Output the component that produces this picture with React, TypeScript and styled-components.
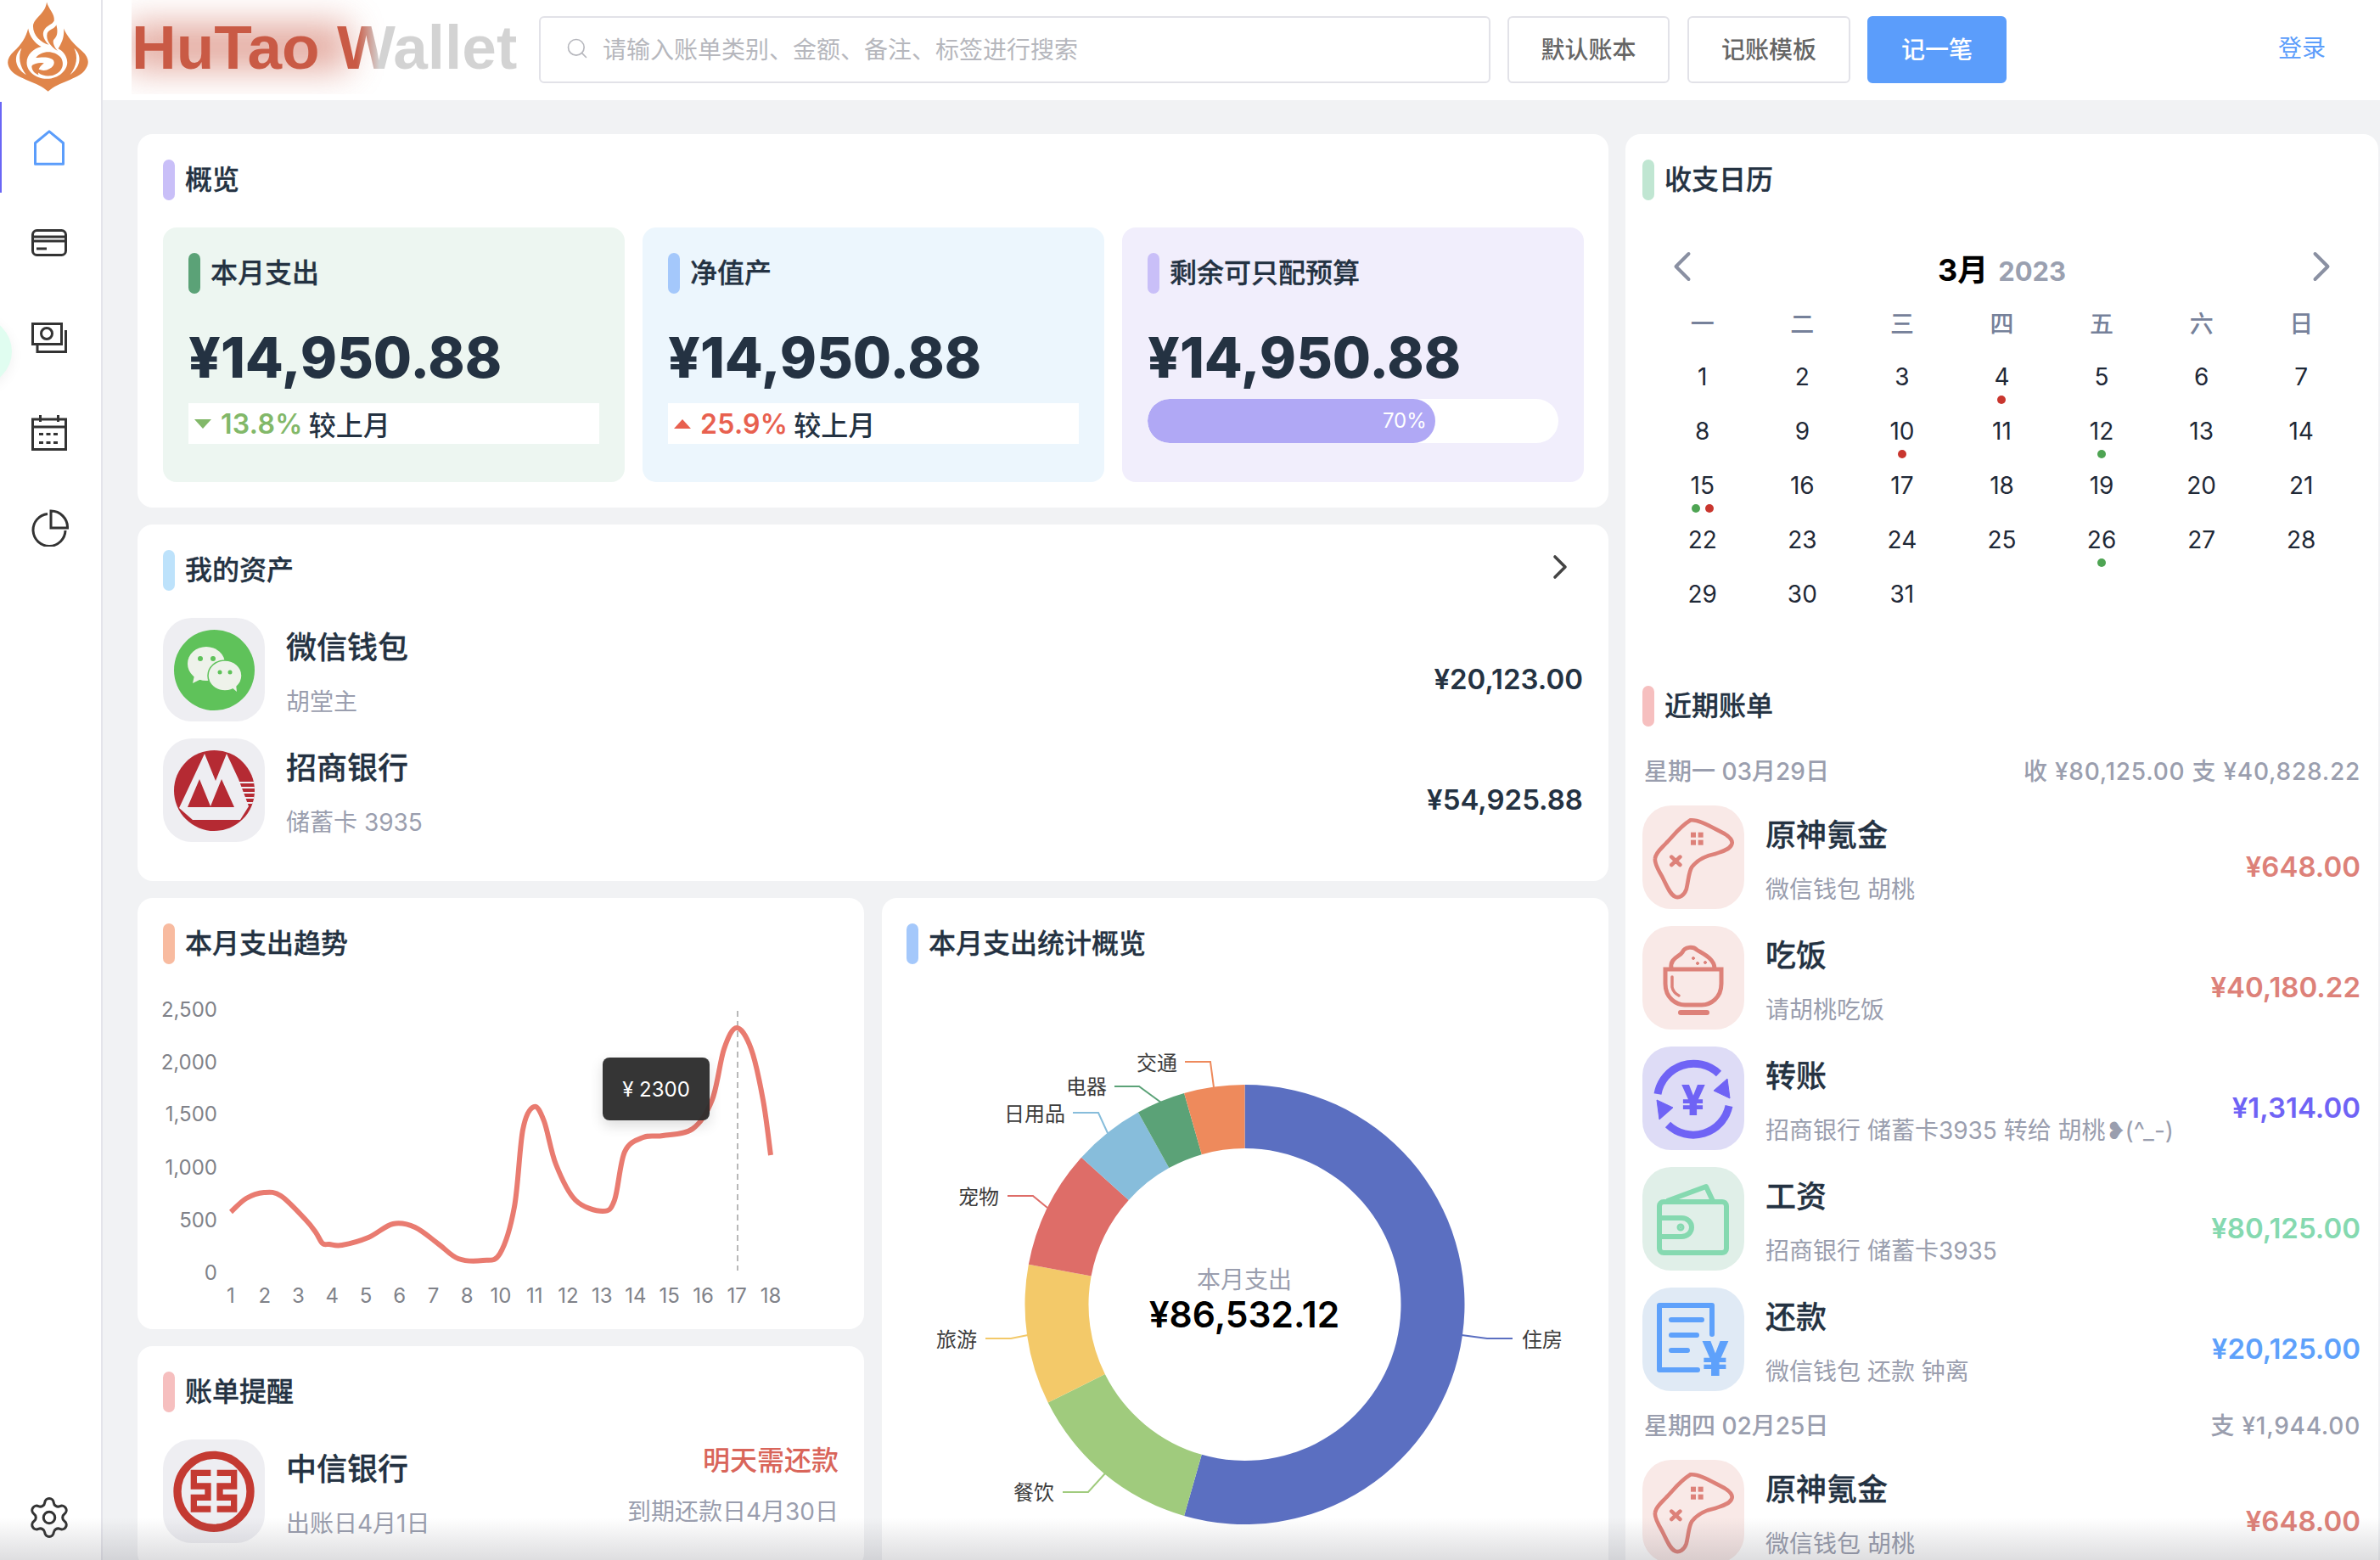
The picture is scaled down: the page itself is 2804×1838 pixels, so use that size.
import React from 'react'
import styled, { createGlobalStyle } from 'styled-components'
import { ChevronLeft, ChevronRight, Search, Settings } from 'lucide-react'

const GlobalStyle = createGlobalStyle`
  html, body {
    margin: 0;
    padding: 0;
    background: #f1f2f4;
  }
  * {
    box-sizing: border-box;
  }
`

const Page = styled.div`
  position: relative;
  width: 2804px;
  height: 1838px;
  overflow: hidden;
  display: grid;
  grid-template-columns: 121px 1fr;
  background: #f1f2f4;
  color: #243242;
  font-family: Inter, 'Noto Sans CJK SC', sans-serif;
`

const BottomFade = styled.div`
  position: absolute;
  left: 0;
  right: 0;
  bottom: 0;
  height: 50px;
  background: linear-gradient(180deg, rgba(90, 90, 100, 0), rgba(90, 90, 100, 0.2));
  pointer-events: none;
`

const Sidebar = styled.aside`
  position: relative;
  display: flex;
  flex-direction: column;
  height: 1838px;
  background: #fff;
  border-right: 2px solid #e4e4ea;
`

const SideBlob = styled.div`
  position: absolute;
  left: -66px;
  top: 374px;
  width: 80px;
  height: 80px;
  border-radius: 50%;
  background: #e0fdf0;
  box-shadow: 0 4px 16px rgba(0, 0, 0, 0.06);
`

const LogoBox = styled.div`
  height: 118px;
  padding-left: 8px;
`

const NavItem = styled.div<{ $active?: boolean }>`
  position: relative;
  height: 112px;
  display: flex;
  align-items: center;
  padding-left: ${(p) => (p.$active ? 40 : 37)}px;
  &::before {
    content: '';
    display: ${(p) => (p.$active ? 'block' : 'none')};
    position: absolute;
    left: 0;
    top: 2px;
    width: 2px;
    height: 107px;
    background: #6a66f5;
  }
`

const SideFoot = styled.div`
  margin-top: auto;
  padding: 0 0 23px 31px;
  color: #333;
  display: flex;
`

const Main = styled.div`
  display: flex;
  flex-direction: column;
  min-width: 0;
`

const Header = styled.header`
  height: 118px;
  flex-shrink: 0;
  display: flex;
  align-items: center;
  padding: 0 64px 2px 34px;
  background: #fff;
`

const Brand = styled.div`
  position: relative;
  width: 480px;
  height: 118px;
  flex-shrink: 0;
`

const BrandHaze = styled.div`
  position: absolute;
  left: 0;
  top: 0;
  width: 300px;
  height: 112px;
  overflow: hidden;
  &::after {
    content: '';
    position: absolute;
    left: -6px;
    top: 28px;
    width: 262px;
    height: 56px;
    background: #d47a69;
    opacity: 0.62;
    filter: blur(20px);
  }
`

const BrandName = styled.div`
  position: absolute;
  left: 0;
  top: 15px;
  font-family: 'Liberation Sans', Arial, sans-serif;
  font-size: 73px;
  line-height: 84px;
  font-weight: 700;
  white-space: nowrap;
  color: transparent;
  background: linear-gradient(90deg, #c95a45 0, #c95a45 265px, #d3d3d3 292px, #d3d3d3 100%);
  -webkit-background-clip: text;
  background-clip: text;
`

const SearchBox = styled.div`
  width: 1121px;
  height: 79px;
  display: flex;
  align-items: center;
  gap: 16px;
  padding: 0 0 2px 29px;
  border: 2px solid #e2e2e8;
  border-radius: 6px;
  font-size: 28px;
  color: #b6b7bd;
  background: #fff;
`

const HeadButton = styled.div<{ $primary?: boolean; $w: number; $ml: number }>`
  width: ${(p) => p.$w}px;
  height: 79px;
  margin-left: ${(p) => p.$ml}px;
  padding-bottom: 2px;
  display: flex;
  align-items: center;
  justify-content: center;
  border-radius: 6px;
  font-size: 28px;
  font-weight: 500;
  color: ${(p) => (p.$primary ? '#fff' : '#666')};
  background: ${(p) => (p.$primary ? '#5b9dfb' : '#fff')};
  border: 2px solid ${(p) => (p.$primary ? '#5b9dfb' : '#e2e2e8')};
`

const LoginLink = styled.div`
  margin: -6px 0 0 auto;
  font-size: 28px;
  color: #5b9dfb;
`

const Content = styled.main`
  flex: 1;
  min-height: 0;
  display: grid;
  grid-template-columns: 1733px 887px;
  gap: 20px;
  padding: 40px 0 0 41px;
`

const Column = styled.div`
  display: flex;
  flex-direction: column;
  gap: 20px;
`

const Card = styled.section`
  background: #fff;
  border-radius: 18px;
  padding: 30px;
`

const AssetsCard = styled(Card)`
  padding-bottom: 46px;
`

const SectionHead = styled.div<{ $inset?: number }>`
  display: flex;
  align-items: center;
  gap: 12px;
  height: 48px;
  padding-left: ${(p) => p.$inset || 0}px;
  font-size: 32px;
  line-height: 44px;
  font-weight: 500;
  color: #243242;
  -webkit-text-stroke: 0.3px #243242;
`

const HeadLabel = styled.span`
  margin-top: -1px;
`

const HeadMark = styled.i<{ $color: string }>`
  width: 14px;
  height: 48px;
  border-radius: 7px;
  background: ${(p) => p.$color};
`

const HeadAction = styled.div`
  margin-left: auto;
  display: flex;
  color: #444;
  transform: translate(-3px, -4px);
`

const StatRow = styled.div`
  display: grid;
  grid-template-columns: repeat(3, 544px);
  gap: 21px;
  margin-top: 32px;
`

const StatCard = styled.div<{ $bg: string }>`
  height: 300px;
  padding: 30px;
  border-radius: 16px;
  background: ${(p) => p.$bg};
`

const StatAmount = styled.div`
  margin-top: 36px;
  height: 80px;
  font-size: 65.5px;
  line-height: 80px;
  font-weight: 800;
  color: #243242;
`

const Compare = styled.div`
  margin-top: 13px;
  height: 48px;
  display: flex;
  align-items: center;
  padding-left: 7px;
  background: #fff;
  font-size: 32px;
  font-weight: 500;
`

const Arrow = styled.i<{ $up?: boolean }>`
  width: 0;
  height: 0;
  margin-right: 11px;
  border-left: 10px solid transparent;
  border-right: 10px solid transparent;
  ${(p) => (p.$up ? 'border-bottom: 11px solid #e8604f;' : 'border-top: 11px solid #82b869;')}
`

const ComparePercent = styled.span<{ $color: string }>`
  margin-right: 7px;
  font-weight: 600;
  letter-spacing: 0.3px;
  color: ${(p) => p.$color};
`

const Progress = styled.div`
  margin-top: 8px;
  height: 52px;
  border-radius: 26px;
  background: #fff;
  overflow: hidden;
`

const ProgressFill = styled.div`
  height: 100%;
  padding-right: 10px;
  border-radius: 26px;
  background: #b0a8f5;
  color: #fff;
  font-size: 24px;
  line-height: 52px;
  text-align: right;
`

const RowList = styled.div`
  display: flex;
  flex-direction: column;
  gap: 20px;
  margin-top: 32px;
`

const Row = styled.div`
  display: flex;
  gap: 25px;
`

const Tile = styled.div<{ $bg?: string }>`
  width: 120px;
  height: 122px;
  flex-shrink: 0;
  display: flex;
  align-items: center;
  justify-content: center;
  border-radius: 34px;
  background: ${(p) => p.$bg || '#eeeef2'};
`

const RowText = styled.div`
  flex: 1;
  min-width: 0;
  padding-top: 10px;
`

const RowName = styled.div`
  font-size: 36px;
  line-height: 50px;
  font-weight: 500;
  color: #243242;
  -webkit-text-stroke: 0.3px #243242;
`

const RowSub = styled.div`
  margin-top: 19px;
  font-size: 28px;
  line-height: 40px;
  color: #9a9eae;
  white-space: nowrap;
`

const RowAmount = styled.div<{ $color?: string }>`
  align-self: center;
  margin-top: 21px;
  font-size: 33px;
  line-height: 44px;
  font-weight: 600;
  color: ${(p) => p.$color || '#243242'};
`

const BottomGrid = styled.div`
  display: grid;
  grid-template-columns: 856px 856px;
  gap: 21px;
`

const TrendCard = styled(Card)`
  padding-bottom: 16px;
`

const ChartWrap = styled.div`
  position: relative;
  margin-top: 34px;
  height: 380px;
`

const ChartSvg = styled.svg`
  display: block;
  overflow: visible;
`

const ChartTooltip = styled.div`
  position: absolute;
  left: 518px;
  top: 76px;
  width: 126px;
  height: 74px;
  display: flex;
  align-items: center;
  justify-content: center;
  border-radius: 8px;
  background: rgba(45, 45, 45, 0.96);
  color: #fff;
  font-size: 24px;
  box-shadow: 0 6px 16px rgba(0, 0, 0, 0.14);
`

const ReminderSide = styled.div`
  text-align: right;
`

const ReminderDue = styled.div`
  font-size: 32px;
  line-height: 50px;
  font-weight: 500;
  color: #d9655a;
`

const ReminderDate = styled.div`
  margin-top: 10px;
  font-size: 28px;
  line-height: 50px;
  color: #9a9eae;
`

const DonutCard = styled(Card)`
  padding: 30px 0 0;
  height: 800px;
`

const DonutSvg = styled.svg`
  display: block;
  margin-top: 34px;
`

const RightCard = styled(Card)`
  padding: 30px 21px 0 20px;
  height: 1700px;
`

const CalNav = styled.div`
  display: flex;
  align-items: center;
  justify-content: space-between;
  height: 52px;
  margin: 52px 16px 0 17px;
  color: #8a90a2;
`

const CalTitle = styled.div`
  display: flex;
  align-items: baseline;
  gap: 12px;
  margin-top: 2px;
  font-size: 36px;
  font-weight: 700;
  color: #000;
`

const CalYear = styled.span`
  font-size: 31px;
  font-weight: 700;
  color: #9aa0b0;
`

const CalGrid = styled.div`
  display: grid;
  grid-template-columns: repeat(7, 1fr);
  margin: 12px 11px 0 12px;
`

const WeekCell = styled.div`
  height: 60px;
  line-height: 60px;
  text-align: center;
  font-size: 28px;
  font-weight: 500;
  color: #76819a;
`

const DayCell = styled.div`
  position: relative;
  height: 64px;
  line-height: 64px;
  text-align: center;
  font-size: 28px;
  color: #1f2937;
`

const DayDots = styled.div`
  position: absolute;
  left: 0;
  right: 0;
  bottom: 0;
  display: flex;
  justify-content: center;
  gap: 6px;
`

const DayDot = styled.i<{ $color: string }>`
  width: 10px;
  height: 10px;
  border-radius: 50%;
  background: ${(p) => p.$color};
`

const BillsHead = styled(SectionHead)`
  margin-top: 76px;
`

const BillDay = styled.div<{ $first?: boolean }>`
  display: flex;
  justify-content: space-between;
  margin-bottom: 20px;
  padding: ${(p) => (p.$first ? 33 : 21)}px 0 0 2px;
  font-size: 28px;
  line-height: 40px;
  font-weight: 500;
  color: #9a9eae;
`

const BillTotal = styled.span`
  letter-spacing: 0.75px;
`

const BillRows = styled.div`
  display: flex;
  flex-direction: column;
  gap: 20px;
`

const HomeIcon = () => (
  <svg width="36" height="42" viewBox="0 0 36 42" fill="none" stroke="#5b9dfb" strokeWidth="3" strokeLinejoin="round">
    <path d="M1.5 15.5 18 1.8l16.5 13.7v24.700h-33z" />
  </svg>
)

const CardIcon = () => (
  <svg width="42" height="32" viewBox="0 0 42 32" fill="none" stroke="#333" strokeWidth="3">
    <rect x="1.5" y="1.5" width="39" height="29" rx="5" />
    <path d="M2 9h38M2 14h38M6 23h12" />
  </svg>
)

const MoneyIcon = () => (
  <svg width="42" height="36" viewBox="0 0 42 36" fill="none" stroke="#333" strokeWidth="3">
    <rect x="1.5" y="1.5" width="34" height="24" />
    <path d="M40.5 9v25.500H7V26" />
    <circle cx="18" cy="13" r="6.500" />
  </svg>
)

const CalendarIcon = () => (
  <svg width="42" height="42" viewBox="0 0 42 42" fill="none" stroke="#333" strokeWidth="3">
    <rect x="1.5" y="5" width="39" height="35.500" />
    <path d="M2 14h38M10.500 0v8M31.500 0v8" />
    <path d="M9 22.500h24M9 32.500h24" strokeDasharray="5 3.500" />
  </svg>
)

const PieIcon = () => (
  <svg width="44" height="44" viewBox="0 0 44 44" fill="none" stroke="#333" strokeWidth="3">
    <path d="M19 5.500A19 19 0 1 0 40 25" />
    <path d="M23 2a19.500 19.500 0 0 1 19.500 20H23z" />
  </svg>
)

const FlameLogo = () => (
  <svg width="98" height="115" viewBox="24 0 304 345" fill="#e0854a">
    <path d="M170 2c8 28 30 43 27 68-7 15-27 15-37 35-8 15 0 35 18 53-28-8-58-33-58-68 2-30 45-45 50-88z" />
    <path d="M205 85c5 20 7 40-10 55-5 10 5 30 15 40-25-15-45-40-38-65 8-15 28-15 33-30z" />
    <path d="M102 98c6 32 23 52 48 67-30 7-54 30-53 60 1 30 33 57 73 57 45 0 75-32 75-60 0-22-17-42-33-50 13-22 23-42 20-74 13 32 38 57 68 84 25 23 28 46 8 70-28 33-93 40-133 76-40-36-105-43-135-76-20-24-15-47 10-70 25-22 45-52 52-84z" />
    <path fill="#fff" d="M78 170c-30 25-28 70 17 98-25-33-30-68-17-98zM270 170c28 25 28 65-15 98 25-33 30-68 15-98z" />
    <path d="M130 205c20-25 65-30 92 0 18 30-2 65-47 67-25 0-50-17-57-42 12 15 32 25 52 20 30-10 35-35 15-42-20-8-40-3-55-3z" />
    <path d="M115 235c10-10 30-13 45-10-15 10-25 25-20 43-15-6-25-18-25-33z" />
  </svg>
)

const WechatLogo = () => (
  <svg width="95" height="95" viewBox="0 0 95 95">
    <circle cx="47.500" cy="47.500" r="47.500" fill="#5fc25a" />
    <ellipse cx="38" cy="40" rx="22" ry="20" fill="#eef2ea" />
    <path d="M24 54l-2 9 10-5z" fill="#eef2ea" />
    <circle cx="31" cy="34" r="3" fill="#5fc25a" />
    <circle cx="46" cy="34" r="3" fill="#5fc25a" />
    <ellipse cx="60" cy="54" rx="20" ry="18" fill="#eef2ea" stroke="#5fc25a" strokeWidth="1.500" />
    <path d="M68 68l6 5-1-9z" fill="#eef2ea" />
    <circle cx="54" cy="50" r="2.500" fill="#5fc25a" />
    <circle cx="66" cy="50" r="2.500" fill="#5fc25a" />
  </svg>
)

const CmbLogo = () => (
  <svg width="95" height="95" viewBox="0 0 95 95">
    <defs>
      <clipPath id="cmb-disc">
        <circle cx="47.500" cy="47.500" r="47.500" />
      </clipPath>
    </defs>
    <g clipPath="url(#cmb-disc)">
      <rect width="95" height="95" fill="#b52a33" />
      <path d="M36 4l13 32L62 4l14 30 6 16 6 16-10 16H22L6 68z" fill="#eeeef2" />
      <path d="M16 67l14-33 13 32 13-32 15 33z" fill="#b52a33" />
      <path d="M76 38h19M78 44h17M80 50h15M82 56h13M84 62h11" stroke="#eeeef2" strokeWidth="2.200" />
    </g>
  </svg>
)

const IcbcLogo = () => (
  <svg width="96" height="96" viewBox="612 32 288 288" fill="none" stroke="#c43a32">
    <circle cx="756" cy="177" r="129" strokeWidth="28" />
    <path d="M745 111H685V158H735V198H685V239H745M767 111H827V158H777V198H827V239H767" strokeWidth="22" />
  </svg>
)

const GameIcon = () => (
  <svg width="120" height="122" viewBox="15 15 360 366" fill="none" stroke="#dd8179" strokeWidth="14" strokeLinecap="round">
    <path d="M185 65c30-3 75 25 115 45 25 13 37 30 30 42-10 20-40 25-60 33-30 6-60 20-80 45-12 18-12 50-20 80-8 22-25 32-40 25-18-8-30-40-45-70-15-25-28-50-25-65 2-22 25-38 40-55 25-25 45-55 85-80z" transform="translate(0 2)" />
    <rect x="186" y="110" width="18" height="18" fill="#dd8179" stroke="none" />
    <rect x="212" y="110" width="18" height="18" fill="#dd8179" stroke="none" />
    <rect x="186" y="137" width="18" height="18" fill="#dd8179" stroke="none" />
    <rect x="212" y="137" width="18" height="18" fill="#dd8179" stroke="none" />
    <path d="M118 197l30 28M148 197l-30 28" />
  </svg>
)

const BowlIcon = () => (
  <svg width="120" height="122" viewBox="0 0 120 122" fill="none" stroke="#dd8179" strokeWidth="5" strokeLinecap="round">
    <path d="M34 50c-2-12 10-14 13-19 3-7 13-7 17-3 6 4 21 10 21 22" />
    <path d="M27 51h66v17c0 17-13 25-23 25H50c-10 0-23-8-23-25z" />
    <path d="M35 60v12c1 5 4 8 8 10" strokeWidth="3.500" />
    <path d="M45 102h31" strokeWidth="6" />
    <circle cx="60" cy="38" r="1.500" fill="#dd8179" strokeWidth="1" />
    <circle cx="65" cy="44" r="1.500" fill="#dd8179" strokeWidth="1" />
    <circle cx="74" cy="43" r="1.500" fill="#dd8179" strokeWidth="1" />
  </svg>
)

const TransferIcon = () => (
  <svg width="120" height="122" viewBox="0 0 120 122" fill="none" stroke="#6f63f5" strokeWidth="9">
    <path d="M18 56A43 43 0 0 1 90 32" />
    <path d="M102 70A43 43 0 0 1 30 92" />
    <path d="M84 52 103 61 100 38zM36 72 17 63 20 86z" fill="#6f63f5" strokeWidth="1" />
    <text x="60" y="81" textAnchor="middle" fontFamily="Inter" fontWeight="800" fontSize="50" fill="#6f63f5" stroke="none">¥</text>
  </svg>
)

const WalletIcon = () => (
  <svg width="120" height="122" viewBox="0 0 120 122" fill="none" stroke="#85d9b0" strokeWidth="6" strokeLinejoin="round">
    <rect x="20" y="41" width="79" height="60" rx="5" />
    <path d="M29 40 75 23l8 17" />
    <path d="M20 60h26c7 0 12 5 12 11s-5 11-12 11H20" />
    <circle cx="45" cy="71" r="1.500" fill="#85d9b0" />
  </svg>
)

const ReceiptIcon = () => (
  <svg width="120" height="122" viewBox="0 0 120 122" fill="none" stroke="#5ea1fb" strokeWidth="6" strokeLinecap="round" strokeLinejoin="round">
    <path d="M82 55V21H20v76h45" />
    <path d="M34 38h36M34 56h30M34 74h19" />
    <text x="86" y="104" textAnchor="middle" fontFamily="Inter" fontWeight="800" fontSize="56" fill="#5ea1fb" stroke="none">¥</text>
  </svg>
)

const smoothPath = (pts: number[][]) => {
  let d = `M${pts[0][0]} ${pts[0][1]}`
  for (let i = 0; i < pts.length - 1; i++) {
    const p0 = pts[i - 1] || pts[i]
    const p1 = pts[i]
    const p2 = pts[i + 1]
    const p3 = pts[i + 2] || p2
    const c1x = p1[0] + (p2[0] - p0[0]) / 6
    const c1y = p1[1] + (p2[1] - p0[1]) / 6
    const c2x = p2[0] - (p3[0] - p1[0]) / 6
    const c2y = p2[1] - (p3[1] - p1[1]) / 6
    d += `C${c1x} ${c1y} ${c2x} ${c2y} ${p2[0]} ${p2[1]}`
  }
  return d
}

const trendPoints = [
  [272, 1428], [290, 1412], [311, 1405], [331, 1409], [360, 1437], [372, 1452], [380, 1465], [388, 1466],
  [403, 1467], [434, 1458], [463, 1442], [489, 1446], [517, 1466], [540, 1483], [569, 1485], [589, 1477],
  [606, 1422], [616, 1331], [629, 1304], [641, 1321], [655, 1372], [678, 1414], [710, 1427], [724, 1414],
  [736, 1357], [758, 1340], [781, 1338], [816, 1330], [839, 1296], [853, 1236], [868, 1211], [885, 1236],
  [899, 1296], [908, 1361],
]

const yTicks = [
  ['2,500', 1189],
  ['2,000', 1251],
  ['1,500', 1312],
  ['1,000', 1375],
  ['500', 1437],
  ['0', 1499],
] as const

const xTicks = [1, 2, 3, 4, 5, 6, 7, 8, 10, 11, 12, 13, 14, 15, 16, 17, 18]

const TrendChart = () => (
  <ChartWrap>
    <ChartSvg width="796" height="380" viewBox="192 1170 796 380">
      {yTicks.map(([label, y]) => (
        <text key={label} x="256" y={y + 9} textAnchor="end" fontSize="24" fill="#808289" fontFamily="Inter">{label}</text>
      ))}
      {xTicks.map((n, i) => (
        <text key={n} x={272 + i * (636 / 16)} y="1535" textAnchor="middle" fontSize="24" fill="#808289" fontFamily="Inter">{n}</text>
      ))}
      <path d="M869 1191V1497" stroke="#b8b8b8" strokeWidth="2" strokeDasharray="7 5" />
      <path d={smoothPath(trendPoints)} fill="none" stroke="#e97b70" strokeWidth="6" />
    </ChartSvg>
    <ChartTooltip>¥ 2300</ChartTooltip>
  </ChartWrap>
)

const polar = (r: number, deg: number) => {
  const a = (deg * Math.PI) / 180
  return [1467.5 + r * Math.sin(a), 1537 - r * Math.cos(a)]
}

const slicePath = (from: number, to: number) => {
  const [ax, ay] = polar(259, from)
  const [bx, by] = polar(259, to)
  const [cx, cy] = polar(184, to)
  const [dx, dy] = polar(184, from)
  const large = to - from > 180 ? 1 : 0
  return `M${ax} ${ay}A259 259 0 ${large} 1 ${bx} ${by}L${cx} ${cy}A184 184 0 ${large} 0 ${dx} ${dy}Z`
}

const slices = [
  { from: 0, to: 196, color: '#5b6fc1', label: '住房', x: 1794, y: 1578, anchor: 'start', line: 'M1723 1573L1753 1577H1783' },
  { from: 196, to: 243.5, color: '#a0cb7d', label: '餐饮', x: 1243, y: 1758, anchor: 'end', line: 'M1253 1758H1283L1303 1736' },
  { from: 243.5, to: 280.5, color: '#f3c969', label: '旅游', x: 1152, y: 1578, anchor: 'end', line: 'M1162 1577H1192L1212 1573' },
  { from: 280.5, to: 312, color: '#de6d68', label: '宠物', x: 1178, y: 1410, anchor: 'end', line: 'M1188 1409H1218L1235 1423' },
  { from: 312, to: 331, color: '#87bddb', label: '日用品', x: 1256, y: 1312, anchor: 'end', line: 'M1265 1311H1295L1306 1335' },
  { from: 331, to: 344, color: '#5ba277', label: '电器', x: 1305, y: 1280, anchor: 'end', line: 'M1314 1280H1343L1369 1299' },
  { from: 344, to: 360, color: '#ee8a5c', label: '交通', x: 1388, y: 1252, anchor: 'end', line: 'M1397 1251H1427L1431 1281' },
]

const DonutChart = () => (
  <DonutSvg width="855" height="668" viewBox="1040 1170 855 668" fontFamily="'Noto Sans CJK SC', sans-serif">
    {slices.map((s) => (
      <g key={s.label}>
        <path d={slicePath(s.from, s.to)} fill={s.color} />
        <path d={s.line} fill="none" stroke={s.color} strokeWidth="2" />
        <text x={s.x} y={s.y + 9} textAnchor={s.anchor as 'start' | 'end'} fontSize="24" fill="#3c3c3c">{s.label}</text>
      </g>
    ))}
    <text x="1467" y="1518" textAnchor="middle" fontSize="28" fill="#9a9eae">本月支出</text>
    <text x="1467" y="1564" textAnchor="middle" fontSize="42.500" fontWeight="600" fontFamily="Inter" fill="#000">¥86,532.12</text>
  </DonutSvg>
)

const weekdays = ['一', '二', '三', '四', '五', '六', '日']
const RED = '#c9362e'
const GREEN = '#4ea453'
const dayMarks: Record<number, string[]> = {
  4: [RED],
  10: [RED],
  12: [GREEN],
  15: [GREEN, RED],
  26: [GREEN],
}

const Calendar = () => (
  <>
    <CalNav>
      <ChevronLeft size={60} strokeWidth={1.6} />
      <CalTitle>
        3月<CalYear>2023</CalYear>
      </CalTitle>
      <ChevronRight size={60} strokeWidth={1.6} />
    </CalNav>
    <CalGrid>
      {weekdays.map((d) => (
        <WeekCell key={d}>{d}</WeekCell>
      ))}
      {Array.from({ length: 31 }, (_, i) => i + 1).map((d) => (
        <DayCell key={d}>
          {d}
          {dayMarks[d] && (
            <DayDots>
              {dayMarks[d].map((c, i) => (
                <DayDot key={i} $color={c} />
              ))}
            </DayDots>
          )}
        </DayCell>
      ))}
    </CalGrid>
  </>
)

const PINK = '#f9e9e7'
const BILL_RED = '#dd8179'

type Bill = { name: string; sub: string; amount: string; color: string; bg: string; icon: React.ReactNode }

const bills: Bill[] = [
  { name: '原神氪金', sub: '微信钱包 胡桃', amount: '¥648.00', color: BILL_RED, bg: PINK, icon: <GameIcon /> },
  { name: '吃饭', sub: '请胡桃吃饭', amount: '¥40,180.22', color: BILL_RED, bg: PINK, icon: <BowlIcon /> },
  { name: '转账', sub: '招商银行 储蓄卡3935 转给 胡桃❥(^_-)', amount: '¥1,314.00', color: '#6f63f5', bg: '#dedcf6', icon: <TransferIcon /> },
  { name: '工资', sub: '招商银行 储蓄卡3935', amount: '¥80,125.00', color: '#85d9b0', bg: '#e0efe8', icon: <WalletIcon /> },
  { name: '还款', sub: '微信钱包 还款 钟离', amount: '¥20,125.00', color: '#5ea1fb', bg: '#e0eaf5', icon: <ReceiptIcon /> },
]

const BillRow = ({ bill }: { bill: Bill }) => (
  <Row>
    <Tile $bg={bill.bg}>{bill.icon}</Tile>
    <RowText>
      <RowName>{bill.name}</RowName>
      <RowSub>{bill.sub}</RowSub>
    </RowText>
    <RowAmount $color={bill.color}>{bill.amount}</RowAmount>
  </Row>
)

export default function App() {
  return (
    <Page>
      <GlobalStyle />
      <Sidebar>
        <SideBlob />
        <LogoBox>
          <FlameLogo />
        </LogoBox>
        <NavItem $active>
          <HomeIcon />
        </NavItem>
        <NavItem>
          <CardIcon />
        </NavItem>
        <NavItem>
          <MoneyIcon />
        </NavItem>
        <NavItem>
          <CalendarIcon />
        </NavItem>
        <NavItem>
          <PieIcon />
        </NavItem>
        <SideFoot>
          <Settings size={54} strokeWidth={1.35} />
        </SideFoot>
      </Sidebar>

      <Main>
        <Header>
          <Brand>
            <BrandHaze />
            <BrandName>HuTao Wallet</BrandName>
          </Brand>
          <SearchBox>
            <Search size={28} strokeWidth={1.4} />
            请输入账单类别、金额、备注、标签进行搜索
          </SearchBox>
          <HeadButton $w={191} $ml={20}>默认账本</HeadButton>
          <HeadButton $w={192} $ml={21}>记账模板</HeadButton>
          <HeadButton $w={164} $ml={20} $primary>记一笔</HeadButton>
          <LoginLink>登录</LoginLink>
        </Header>

        <Content>
          <Column>
            <Card>
              <SectionHead>
                <HeadMark $color="#c9bff8" />
                <HeadLabel>概览</HeadLabel>
              </SectionHead>
              <StatRow>
                <StatCard $bg="#edf6f1">
                  <SectionHead>
                    <HeadMark $color="#5ba277" />
                    <HeadLabel>本月支出</HeadLabel>
                  </SectionHead>
                  <StatAmount>¥14,950.88</StatAmount>
                  <Compare>
                    <Arrow />
                    <ComparePercent $color="#82b869">13.8%</ComparePercent>
                    较上月
                  </Compare>
                </StatCard>
                <StatCard $bg="#ecf6fd">
                  <SectionHead>
                    <HeadMark $color="#a4c8fb" />
                    <HeadLabel>净值产</HeadLabel>
                  </SectionHead>
                  <StatAmount>¥14,950.88</StatAmount>
                  <Compare>
                    <Arrow $up />
                    <ComparePercent $color="#e8604f">25.9%</ComparePercent>
                    较上月
                  </Compare>
                </StatCard>
                <StatCard $bg="#f1eefc">
                  <SectionHead>
                    <HeadMark $color="#c9bff8" />
                    <HeadLabel>剩余可只配预算</HeadLabel>
                  </SectionHead>
                  <StatAmount>¥14,950.88</StatAmount>
                  <Progress>
                    <ProgressFill style={{ width: '70%' }}>70%</ProgressFill>
                  </Progress>
                </StatCard>
              </StatRow>
            </Card>

            <AssetsCard>
              <SectionHead>
                <HeadMark $color="#bde2fb" />
                <HeadLabel>我的资产</HeadLabel>
                <HeadAction>
                  <ChevronRight size={48} strokeWidth={1.8} />
                </HeadAction>
              </SectionHead>
              <RowList>
                <Row>
                  <Tile>
                    <WechatLogo />
                  </Tile>
                  <RowText>
                    <RowName>微信钱包</RowName>
                    <RowSub>胡堂主</RowSub>
                  </RowText>
                  <RowAmount>¥20,123.00</RowAmount>
                </Row>
                <Row>
                  <Tile>
                    <CmbLogo />
                  </Tile>
                  <RowText>
                    <RowName>招商银行</RowName>
                    <RowSub>储蓄卡 3935</RowSub>
                  </RowText>
                  <RowAmount>¥54,925.88</RowAmount>
                </Row>
              </RowList>
            </AssetsCard>

            <BottomGrid>
              <Column>
                <TrendCard>
                  <SectionHead>
                    <HeadMark $color="#f8bba0" />
                    <HeadLabel>本月支出趋势</HeadLabel>
                  </SectionHead>
                  <TrendChart />
                </TrendCard>
                <Card>
                  <SectionHead>
                    <HeadMark $color="#f6bfbf" />
                    <HeadLabel>账单提醒</HeadLabel>
                  </SectionHead>
                  <RowList>
                    <Row>
                      <Tile>
                        <IcbcLogo />
                      </Tile>
                      <RowText>
                        <RowName>中信银行</RowName>
                        <RowSub>出账日4月1日</RowSub>
                      </RowText>
                      <ReminderSide>
                        <ReminderDue>明天需还款</ReminderDue>
                        <ReminderDate>到期还款日4月30日</ReminderDate>
                      </ReminderSide>
                    </Row>
                  </RowList>
                </Card>
              </Column>
              <DonutCard>
                <SectionHead $inset={29}>
                  <HeadMark $color="#a4c8fb" />
                  <HeadLabel>本月支出统计概览</HeadLabel>
                </SectionHead>
                <DonutChart />
              </DonutCard>
            </BottomGrid>
          </Column>

          <RightCard>
            <SectionHead>
              <HeadMark $color="#c0e6d2" />
              <HeadLabel>收支日历</HeadLabel>
            </SectionHead>
            <Calendar />
            <BillsHead>
              <HeadMark $color="#f6bfbf" />
              <HeadLabel>近期账单</HeadLabel>
            </BillsHead>
            <BillDay $first>
              <span>星期一 03月29日</span>
              <BillTotal>收 ¥80,125.00 支 ¥40,828.22</BillTotal>
            </BillDay>
            <BillRows>
              {bills.map((b) => (
                <BillRow key={b.name} bill={b} />
              ))}
            </BillRows>
            <BillDay>
              <span>星期四 02月25日</span>
              <BillTotal>支 ¥1,944.00</BillTotal>
            </BillDay>
            <BillRows>
              <BillRow bill={bills[0]} />
            </BillRows>
          </RightCard>
        </Content>
      </Main>
      <BottomFade />
    </Page>
  )
}
